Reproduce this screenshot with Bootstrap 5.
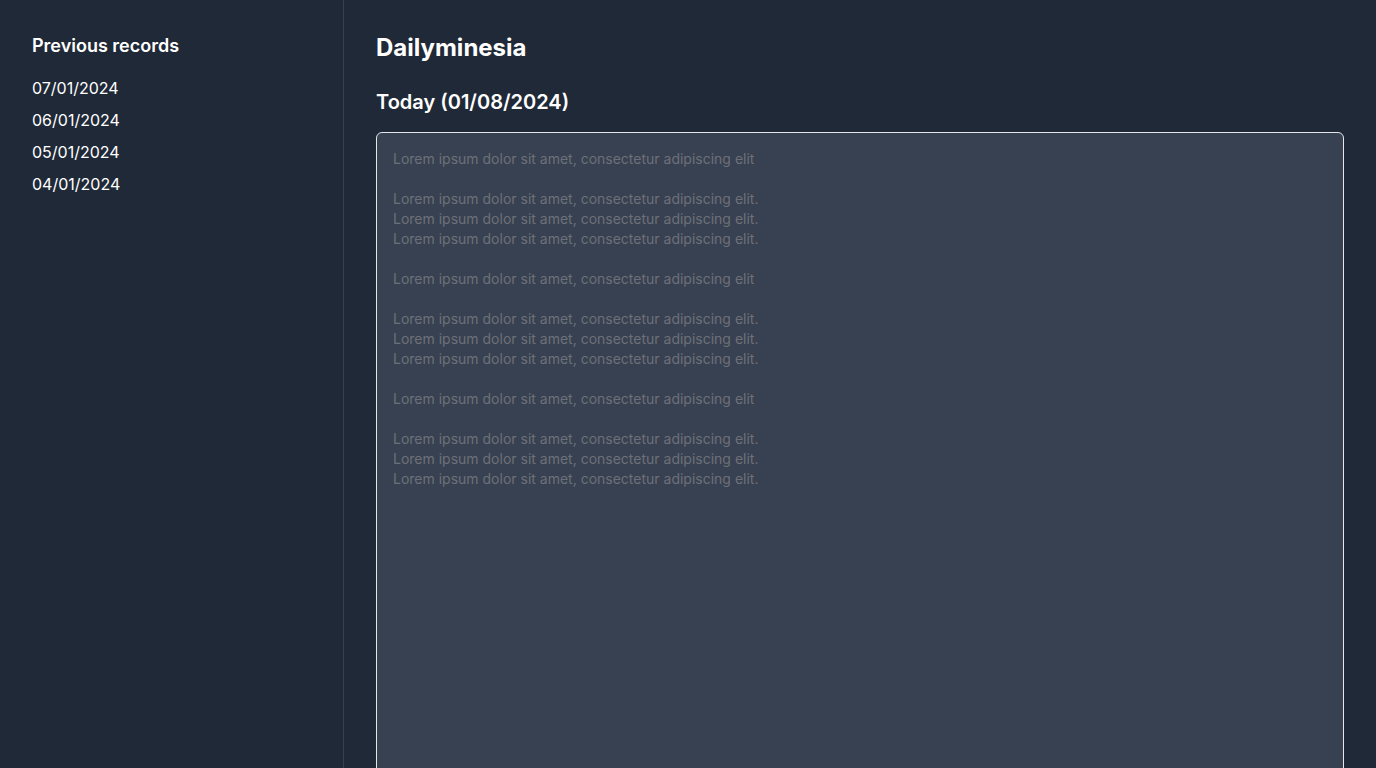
<!DOCTYPE html>
<html lang="en">
<head>
<meta charset="utf-8">
<meta name="viewport" content="width=device-width, initial-scale=1">
<title>Dailyminesia</title>
<link href="https://cdn.jsdelivr.net/npm/bootstrap@5.3.0/dist/css/bootstrap.min.css" rel="stylesheet">
<style>
  body { font-family: Inter, sans-serif; background: #1f2937; color: #fff; }
  .app-shell { height: 100vh; overflow: hidden; }
  .records { width: 25%; padding: 32px; border-right: 1px solid #374151; }
  .records-title { font-size: 18px; line-height: 28px; font-weight: 600; margin-bottom: 16px; }
  .records-list { gap: 8px; }
  .records-list a { display: block; font-size: 16px; line-height: 24px; color: #fff; text-decoration: none; }
  .journal { padding: 32px; min-width: 0; }
  .journal-title { font-size: 24px; line-height: 32px; font-weight: 700; margin-bottom: 24px; }
  .journal-day { font-size: 20px; line-height: 28px; font-weight: 600; margin-bottom: 16px; }
  .journal-entry { height: 100vh; padding: 16px; font-size: 14px; line-height: 20px; color: #fff; background: #374151; border: 1px solid #e5e7eb; border-radius: 6px; resize: none; }
  .journal-entry:focus { color: #fff; background: #374151; }
  .journal-entry::placeholder { color: #6e7078; opacity: 1; }
</style>
</head>
<body>
<div class="app-shell d-flex">
  <aside class="records flex-shrink-0">
    <h2 class="records-title">Previous records</h2>
    <ul class="records-list list-unstyled d-flex flex-column mb-0">
      <li><a href="#">07/01/2024</a></li>
      <li><a href="#">06/01/2024</a></li>
      <li><a href="#">05/01/2024</a></li>
      <li><a href="#">04/01/2024</a></li>
    </ul>
  </aside>
  <main class="journal flex-grow-1">
    <h1 class="journal-title">Dailyminesia</h1>
    <h2 class="journal-day"><label for="entry">Today (01/08/2024)</label></h2>
    <textarea id="entry" class="journal-entry form-control" placeholder="Lorem ipsum dolor sit amet, consectetur adipiscing elit

Lorem ipsum dolor sit amet, consectetur adipiscing elit.
Lorem ipsum dolor sit amet, consectetur adipiscing elit.
Lorem ipsum dolor sit amet, consectetur adipiscing elit.

Lorem ipsum dolor sit amet, consectetur adipiscing elit

Lorem ipsum dolor sit amet, consectetur adipiscing elit.
Lorem ipsum dolor sit amet, consectetur adipiscing elit.
Lorem ipsum dolor sit amet, consectetur adipiscing elit.

Lorem ipsum dolor sit amet, consectetur adipiscing elit

Lorem ipsum dolor sit amet, consectetur adipiscing elit.
Lorem ipsum dolor sit amet, consectetur adipiscing elit.
Lorem ipsum dolor sit amet, consectetur adipiscing elit."></textarea>
  </main>
</div>
<script src="https://cdn.jsdelivr.net/npm/bootstrap@5.3.0/dist/js/bootstrap.bundle.min.js"></script>
</body>
</html>
